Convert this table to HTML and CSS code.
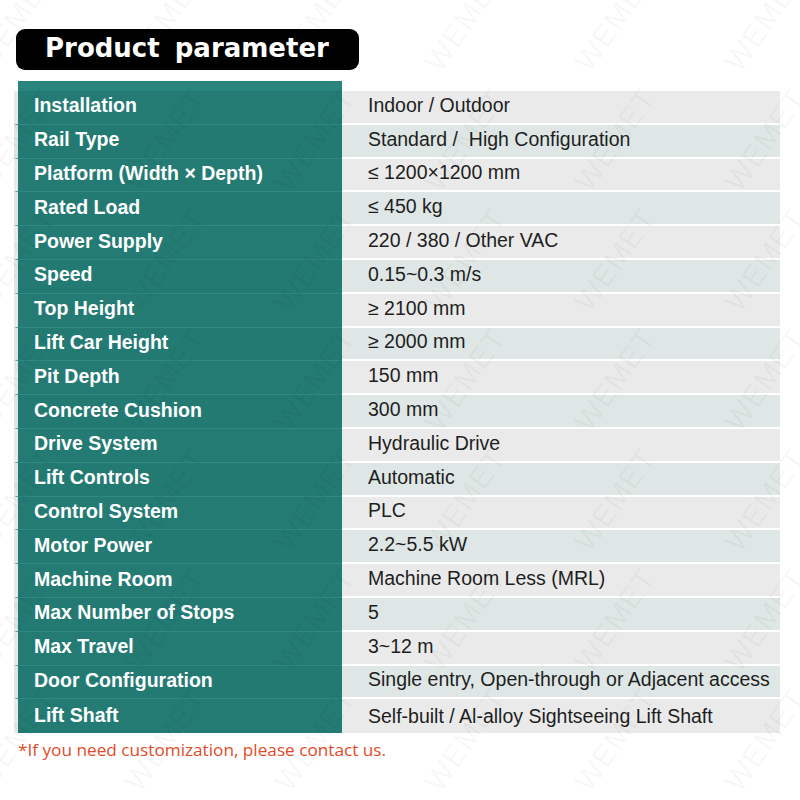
FILE: index.html
```html
<!DOCTYPE html>
<html lang="en">
<head>
<meta charset="utf-8">
<title>Product parameter</title>
<link rel="stylesheet" href="styles.css">
</head>
<body>
<div class="page">
  <div class="title"><span>Product parameter</span></div>
  <div class="sheet">
    <div class="cap"></div><div class="cap-empty"></div>
    <div class="k a">Installation</div><div class="v a">Indoor / Outdoor</div>
    <div class="k b">Rail Type</div><div class="v b">Standard /&nbsp; High Configuration</div>
    <div class="k a">Platform (Width × Depth)</div><div class="v a">≤ 1200×1200 mm</div>
    <div class="k b">Rated Load</div><div class="v b">≤ 450 kg</div>
    <div class="k a">Power Supply</div><div class="v a">220 / 380 / Other VAC</div>
    <div class="k b">Speed</div><div class="v b">0.15~0.3 m/s</div>
    <div class="k a">Top Height</div><div class="v a">≥ 2100 mm</div>
    <div class="k b">Lift Car Height</div><div class="v b">≥ 2000 mm</div>
    <div class="k a">Pit Depth</div><div class="v a">150 mm</div>
    <div class="k b">Concrete Cushion</div><div class="v b">300 mm</div>
    <div class="k a">Drive System</div><div class="v a">Hydraulic Drive</div>
    <div class="k b">Lift Controls</div><div class="v b">Automatic</div>
    <div class="k a">Control System</div><div class="v a">PLC</div>
    <div class="k b">Motor Power</div><div class="v b">2.2~5.5 kW</div>
    <div class="k a">Machine Room</div><div class="v a">Machine Room Less (MRL)</div>
    <div class="k b">Max Number of Stops</div><div class="v b">5</div>
    <div class="k a">Max Travel</div><div class="v a">3~12 m</div>
    <div class="k b">Door Configuration</div><div class="v b">Single entry, Open-through or Adjacent access</div>
    <div class="k a last">Lift Shaft</div><div class="v a last">Self-built / Al-alloy Sightseeing Lift Shaft</div>
  </div>
  <p class="note">*If you need customization, please contact us.</p>
  <div class="watermark" aria-hidden="true">
    <span>WEMET</span><span>WEMET</span><span>WEMET</span><span>WEMET</span><span>WEMET</span><span>WEMET</span>
    <span>WEMET</span><span>WEMET</span><span>WEMET</span><span>WEMET</span><span>WEMET</span><span>WEMET</span>
    <span>WEMET</span><span>WEMET</span><span>WEMET</span><span>WEMET</span><span>WEMET</span><span>WEMET</span>
    <span>WEMET</span><span>WEMET</span><span>WEMET</span><span>WEMET</span><span>WEMET</span><span>WEMET</span>
    <span>WEMET</span><span>WEMET</span><span>WEMET</span><span>WEMET</span><span>WEMET</span><span>WEMET</span>
    <span>WEMET</span><span>WEMET</span><span>WEMET</span><span>WEMET</span><span>WEMET</span><span>WEMET</span>
    <span>WEMET</span><span>WEMET</span><span>WEMET</span><span>WEMET</span><span>WEMET</span><span>WEMET</span>
  </div>
</div>
</body>
</html>
```

FILE: styles.css
```css
* { box-sizing: border-box; }

html, body {
  margin: 0;
  padding: 0;
  background: #ffffff;
}

.page {
  position: relative;
  width: 800px;
  height: 800px;
  overflow: hidden;
  padding-top: 29px;
  font-family: "Liberation Sans", Arial, sans-serif;
}

.title {
  margin-left: 16px;
  width: 343px;
  height: 41px;
  background: #000000;
  border-radius: 9px;
  display: flex;
  align-items: center;
  padding-left: 29px;
  padding-bottom: 3px;
}

.title span {
  font-family: "DejaVu Sans", sans-serif;
  font-weight: bold;
  font-size: 26px;
  color: #ffffff;
  word-spacing: 6px;
  white-space: nowrap;
}

.sheet {
  margin-top: 11px;
  margin-left: 14px;
  width: 766px;
  display: grid;
  grid-template-columns: 328px 1fr;
  grid-template-rows: 10px;
  grid-auto-rows: 33.8px;
}

.cap {
  margin-left: 4px;
  background: #29847d;
}

.k, .v {
  display: flex;
  align-items: center;
  padding-bottom: 3px;
  font-size: 19.5px;
  white-space: nowrap;
}

.k {
  border-left: 4px solid #eaeaea;
  border-bottom: 1px solid #2f8982;
  background-clip: padding-box;
  color: #ffffff;
  font-weight: bold;
  padding-left: 16px;
}

.k.a { border-left-color: #eaeaea; background-color: #237b74; }
.k.b { border-left-color: #dde6e4; background-color: #227a73; }

.v {
  border-bottom: 2px solid #ffffff;
  color: #1e1e1e;
  padding-left: 26px;
}

.v.a { background: #eaeaea; }
.v.b { background: #dee7e5; }

.k.last { border-bottom: none; padding-bottom: 1px; }
.v.last { border-bottom: none; padding-bottom: 0; }

.note {
  margin: 5px 0 0 18px;
  font-family: "Open Sans", "Noto Sans", sans-serif;
  font-size: 17.2px;
  color: #e24b27;
}

.watermark {
  position: absolute;
  top: -40px;
  left: -60px;
  right: 0;
  bottom: 0;
  display: grid;
  grid-template-columns: repeat(6, 150px);
  grid-auto-rows: 120px;
  pointer-events: none;
}

.watermark span {
  display: block;
  transform: rotate(-55deg);
  font-family: "Liberation Sans", Arial, sans-serif;
  font-size: 30px;
  color: rgba(0, 0, 0, 0.04);
  letter-spacing: 1px;
  align-self: center;
  justify-self: center;
}
```
